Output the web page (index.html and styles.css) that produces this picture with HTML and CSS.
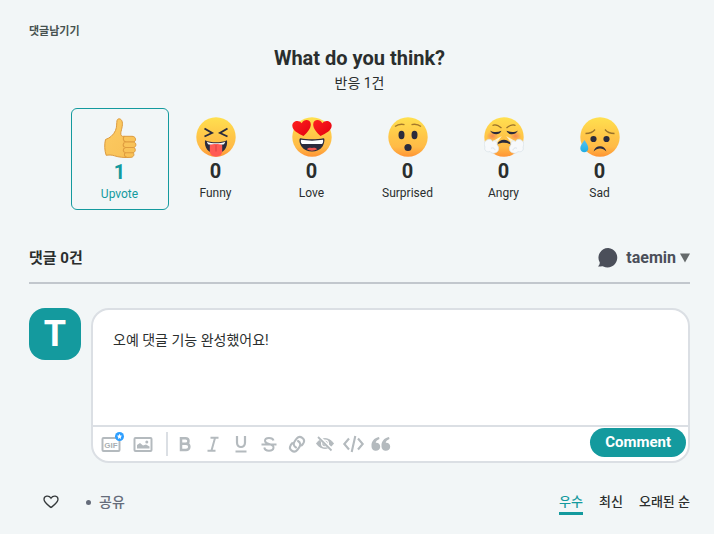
FILE: index.html
```html
<!DOCTYPE html>
<html lang="ko">
<head>
<meta charset="utf-8">
<meta name="viewport" content="width=device-width, initial-scale=1">
<title>댓글남기기</title>
<link rel="stylesheet" href="styles.css">
</head>
<body>
<svg class="defs" width="0" height="0" aria-hidden="true">
  <defs>
    <linearGradient id="face" x1="0" y1="0" x2="0" y2="1">
      <stop offset="0" stop-color="#ffe04f"/><stop offset=".5" stop-color="#ffc548"/><stop offset=".75" stop-color="#ffbb47"/><stop offset="1" stop-color="#ff9434"/>
    </linearGradient>
    <linearGradient id="heart" x1="0" y1="0" x2="1" y2="1">
      <stop offset="0" stop-color="#ff2020"/><stop offset="1" stop-color="#e2000f"/>
    </linearGradient>
    <linearGradient id="tear" x1="0" y1="0" x2="0" y2="1">
      <stop offset="0" stop-color="#58c2ee"/><stop offset="1" stop-color="#20aee4"/>
    </linearGradient>
    <linearGradient id="hand" x1="0" y1="0" x2="1" y2="1">
      <stop offset="0" stop-color="#fccb63"/><stop offset="1" stop-color="#f8c055"/>
    </linearGradient>
    <radialGradient id="blush">
      <stop offset="0" stop-color="#f47a55" stop-opacity=".8"/><stop offset="1" stop-color="#f47a55" stop-opacity="0"/>
    </radialGradient>
  </defs>
</svg>
<main class="page">
  <h3 class="page-label">댓글남기기</h3>

  <section class="poll">
    <h2 class="poll-title">What do you think?</h2>
    <p class="poll-total">반응 1건</p>
    <div class="reactions">
      <button type="button" class="reaction selected" aria-pressed="true">
        <svg class="emoji" viewBox="0 0 40 40" aria-hidden="true">
          <path d="M5.5 21.5C10 20 13.500 17 15.500 12.500C17 9 16.500 5 17 2.500C17.500 .3 20.500 .3 21.700 2.500C23.500 5.700 21.500 11 20.800 14.800C20.500 17.300 21.700 18.800 24 18.300H32C36.300 18.300 36.400 23.300 33.800 23.900C36.800 25 36.300 29 33.800 29.500C36.300 30.700 35.500 34.300 33 34.700C34.800 36 33.800 39.300 31 39.300C24.500 39.900 18.500 39.200 14.500 37.800C11.500 36.700 8.500 37 6.200 37.300C4.500 33 4.300 26 5.500 21.500Z" fill="url(#hand)" stroke="#dc9a3d" stroke-width="1"/>
          <path d="M33.800 23.900H26C22.800 23.600 22.600 19.500 24.500 18.300M33.800 29.500H25.500C22.300 29 22.500 24.800 25.500 23.900M33 34.800H25.500C22.500 34.200 22.500 30.500 25.500 29.500M27 39.300C24 38.800 23.500 35.500 25.800 34.800" fill="none" stroke="#df9c3f" stroke-width="1.100"/>
        </svg>
        <strong class="count">1</strong><span class="name">Upvote</span>
      </button>
      <button type="button" class="reaction" aria-pressed="false">
        <svg class="emoji" viewBox="0 0 40 40" aria-hidden="true">
          <circle cx="20" cy="20" r="19.700" fill="url(#face)"/>
          <path d="M8.500 11.500L16 16L8.500 19.500M31.500 11.500L24 16L31.500 19.500" fill="none" stroke="#2b2b3c" stroke-width="1.900"/>
          <path d="M9 23.300C15 26 25 26 31 23.300C32 31 27.500 36.500 20 36.500S8 31 9 23.300Z" fill="#2b2b3c"/>
          <path d="M10.800 24.800C16 26.800 24 26.800 29.300 24.800L28 27.200C23 28.500 17 28.500 12 27.200Z" fill="#fff"/>
          <path d="M13.800 28C17 26.600 23 26.600 26.200 28V34C26.200 37.500 23.500 39.700 20 39.700S13.800 37.500 13.800 34Z" fill="#ff5a54"/>
          <path d="M20 28V34.500" stroke="#d93f42" stroke-width="1"/>
        </svg>
        <strong class="count">0</strong><span class="name">Funny</span>
      </button>
      <button type="button" class="reaction" aria-pressed="false">
        <svg class="emoji" viewBox="0 0 40 40" aria-hidden="true">
          <circle cx="20" cy="20" r="19.700" fill="url(#face)"/>
          <path d="M11.500 19C6 16.500 .5 13.500 .3 8.800C.2 4.200 6.500 2.200 9.700 6.200C12 1.700 18.500 2.200 18.800 7.200C19 11.500 15 15.800 11.500 19Z" fill="url(#heart)"/>
          <path d="M28.500 19C34 16.500 39.500 13.500 39.700 8.800C39.800 4.200 33.500 2.200 30.300 6.200C28 1.700 21.500 2.200 21.200 7.200C21 11.500 25 15.800 28.500 19Z" fill="url(#heart)"/>
          <path d="M8.500 21.200C15 22.500 25 22.500 31.500 21.200C33.500 21.500 32 27 30.500 29.500C26 36.200 14 36.200 9.500 29.500C7.500 26.500 6.500 21.500 8.500 21.200Z" fill="#2b2b3c"/>
          <path d="M9 22.800C15 23.900 25 23.900 31 22.800C31.500 24.800 31 26 30 27H10C9 26 8.500 24.800 9 22.800Z" fill="#fff"/>
          <path d="M14.800 32.300C17 30 18.500 31 20 31S23 30 25.200 32.300C22 34.200 18 34.200 14.800 32.300Z" fill="#f05550"/>
        </svg>
        <strong class="count">0</strong><span class="name">Love</span>
      </button>
      <button type="button" class="reaction" aria-pressed="false">
        <svg class="emoji" viewBox="0 0 40 40" aria-hidden="true">
          <circle cx="20" cy="20" r="19.700" fill="url(#face)"/>
          <ellipse cx="13.500" cy="18" rx="3" ry="4.200" fill="#2b2b3c"/>
          <ellipse cx="26.500" cy="18" rx="3" ry="4.200" fill="#2b2b3c"/>
          <ellipse cx="20" cy="30.500" rx="3.600" ry="3.500" fill="#2b2b3c"/>
          <path d="M7 9.600C9.500 7.500 13 6.800 16.500 7.600M33 9.600C30.500 7.500 27 6.800 23.500 7.600" fill="none" stroke="#a5792b" stroke-width="1.300"/>
        </svg>
        <strong class="count">0</strong><span class="name">Surprised</span>
      </button>
      <button type="button" class="reaction" aria-pressed="false">
        <svg class="emoji" viewBox="0 0 40 40" aria-hidden="true">
          <circle cx="20" cy="20" r="19.700" fill="url(#face)"/>
          <ellipse cx="8.500" cy="19" rx="6" ry="5" fill="url(#blush)"/>
          <ellipse cx="31.500" cy="19" rx="6" ry="5" fill="url(#blush)"/>
          <path d="M8.500 8.500C11 7 14 8 17.500 11M31.500 8.500C29 7 26 8 22.500 11" fill="none" stroke="#98712b" stroke-width="1.300"/>
          <path d="M6 13.500C9 15.500 13.500 15.500 17.500 13.800C15.500 18.500 9 18.700 6 13.500ZM34 13.500C31 15.500 26.500 15.500 22.500 13.800C24.500 18.500 31 18.700 34 13.500Z" fill="#2b2b3c"/>
          <path d="M12.800 27.800C15.500 21 24.500 21 27.200 27.800C23 25.200 17 25.200 12.800 27.800Z" fill="#2b2b3c"/>
          <path d="M17.800 19L9 24L12 27ZM22.200 19L31 24L28 27Z" fill="#fff4d6"/>
          <path d="M3 23C5 21.600 7.500 22.400 8.500 24.500C11 22.500 14 25 13 28C15.500 30 15 35 11.500 35.700C9 36.800 7 36 6 34.600C2.500 35.500 -.2 33.200 1 30C-.5 27.500 .2 24 3 23Z" fill="#f7f9fb" stroke="#dbe3e8" stroke-width=".8"/>
          <path d="M37 23C35 21.600 32.500 22.400 31.500 24.500C29 22.500 26 25 27 28C24.500 30 25 35 28.500 35.700C31 36.800 33 36 34 34.600C37.500 35.500 40.200 33.200 39 30C40.500 27.500 39.800 24 37 23Z" fill="#f7f9fb" stroke="#dbe3e8" stroke-width=".8"/>
          <path d="M7 31.500C8.500 30 11 31.500 11 33.300M33 31.500C31.500 30 29 31.500 29 33.300" fill="none" stroke="#d3dce3" stroke-width=".8"/>
        </svg>
        <strong class="count">0</strong><span class="name">Angry</span>
      </button>
      <button type="button" class="reaction" aria-pressed="false">
        <svg class="emoji" viewBox="0 0 40 40" aria-hidden="true">
          <circle cx="20" cy="20" r="19.700" fill="url(#face)"/>
          <circle cx="13.500" cy="22" r="3.100" fill="#2b2b3c"/>
          <circle cx="26.500" cy="22" r="3.100" fill="#2b2b3c"/>
          <path d="M13.600 34.500C15 27.500 25 27.500 26.400 34.500C22.500 30.500 17.500 30.500 13.600 34.500Z" fill="#2b2b3c"/>
          <path d="M5.500 16.500C10 16.500 13 15.300 15 12.500M34.500 16.500C30 16.500 27 15.300 25 12.500" fill="none" stroke="#98712b" stroke-width="1.300"/>
          <path d="M4.500 23C6.500 26 8.300 28.500 8.300 31.200C8.300 36.500 .3 36.500 .3 31.200C.3 28.500 2.500 26 4.500 23Z" fill="url(#tear)"/>
        </svg>
        <strong class="count">0</strong><span class="name">Sad</span>
      </button>
    </div>
  </section>

  <header class="thread-head">
    <h2 class="thread-count">댓글 0건</h2>
    <button type="button" class="account">
      <svg class="bubble" viewBox="0 0 20 20" aria-hidden="true"><path d="M10.300 0A9.700 9.700 0 1 1 5.300 18.400C3.800 18 1.800 18.600 0 18.500C1.200 17.400 1.800 16 1.800 14.500A9.700 9.700 0 0 1 10.300 0Z" fill="#4b4f5a"/></svg>
      <span>taemin</span>
      <svg class="caret" viewBox="0 0 10 10" aria-hidden="true"><path d="M0 .5H10L5 9.500Z" fill="#656a6b"/></svg>
    </button>
  </header>

  <form class="composer">
    <div class="avatar" aria-hidden="true">T</div>
    <div class="editor">
      <textarea class="draft" aria-label="댓글" spellcheck="false">오예 댓글 기능 완성했어요!</textarea>
      <div class="toolbar">
        <div class="tools media">
          <button type="button" class="tool gif" aria-label="GIF">
            <svg viewBox="0 0 24 24"><rect x="3.500" y="6" width="17" height="13" rx="1" fill="none" stroke="#b4babe" stroke-width="2"/><text class="gif-text" x="12" y="15.500" text-anchor="middle">GIF</text><circle cx="20.500" cy="4.500" r="4.500" fill="#2e9fff"/><path d="M20.500 1.800L21.300 3.500L23.100 3.700L21.800 5L22.100 6.900L20.500 6L18.900 6.900L19.200 5L17.900 3.700L19.700 3.500Z" fill="#fff"/></svg>
          </button>
          <button type="button" class="tool" aria-label="Image">
            <svg viewBox="0 0 24 24"><rect x="3.500" y="6" width="17" height="13" rx="1" fill="none" stroke="#b4babe" stroke-width="2"/><path d="M6 16.500V13L9 11L12 13.500L15 12.500L18.500 14.500V16.500Z" fill="#b4babe"/><circle cx="15.800" cy="10" r="1.500" fill="#b4babe"/></svg>
          </button>
        </div>
        <div class="tools">
          <button type="button" class="tool" aria-label="Bold"><svg viewBox="0 0 24 24"><path d="M8 6.200H12.500C16.500 6.200 16.500 11.700 12.500 11.700H8ZM8 11.700H13C17.500 11.700 17.500 18 13 18H8Z" fill="none" stroke="#b4babe" stroke-width="2.500"/></svg></button>
          <button type="button" class="tool" aria-label="Italic"><svg viewBox="0 0 24 24"><path d="M9.500 5.800H17.500M6.500 18.700H14.500M14 6L10.500 18.500" fill="none" stroke="#b4babe" stroke-width="2"/></svg></button>
          <button type="button" class="tool" aria-label="Underline"><svg viewBox="0 0 24 24"><path d="M8 4V10.500C8 16.500 16 16.500 16 10.500V4M6.500 19.500H17.500" fill="none" stroke="#b4babe" stroke-width="2.200"/></svg></button>
          <button type="button" class="tool" aria-label="Strikethrough"><svg viewBox="0 0 24 24"><path d="M16.500 8.500C15.500 5 8 5 8 8.800C8 11 10 11.500 12 12C15 12.700 16.800 13.500 16.500 15.800C16 19.500 8 19.800 7.300 15.500M4.500 12.500H19.500" fill="none" stroke="#b4babe" stroke-width="2"/></svg></button>
          <button type="button" class="tool" aria-label="Link"><svg viewBox="0 0 24 24"><path d="M11 15.500C8.500 14 8 11.500 9.800 9.200L11.800 6.500C15 2.700 21 7 18.300 11.300L16.800 13.300M13 9C15.500 10.500 16 13 14.200 15.300L12.200 18C9 21.800 3 17.500 5.700 13.200L7.200 11.200" fill="none" stroke="#b4babe" stroke-width="2.100" stroke-linecap="round"/></svg></button>
          <button type="button" class="tool" aria-label="Spoiler"><svg viewBox="0 0 24 24"><path d="M3.500 11.500C7.500 5 16.500 5 20.500 11.500C16.500 18 7.500 18 3.500 11.500Z" fill="#b4babe" stroke="#b4babe"/><circle cx="12" cy="11.500" r="3.400" fill="none" stroke="#fff" stroke-width="1.300"/><path d="M5.500 4.500L19 18" stroke="#fff" stroke-width="3.800"/><path d="M5 5L18.500 18.500" stroke="#b4babe" stroke-width="1.800"/></svg></button>
          <button type="button" class="tool" aria-label="Code"><svg viewBox="0 0 24 24"><path d="M8 6.500L3.300 12L8 17.500M17 6.500L21.700 12L17 17.500M14.300 4L10.700 20" fill="none" stroke="#b4babe" stroke-width="2.100"/></svg></button>
          <button type="button" class="tool" aria-label="Quote"><svg viewBox="0 0 24 24"><path id="quote-mark" d="M10 5C5 6 2.300 9.500 2.500 14C2.500 20.500 11.200 20 11.200 14.800C11.200 11.800 9 10.500 6.700 10.800C7 9 8.500 7.700 10.500 7Z" fill="#b4babe"/><use href="#quote-mark" x="10"/></svg></button>
        </div>
        <button type="submit" class="submit">Comment</button>
      </div>
    </div>
  </form>

  <footer class="thread-foot">
    <div class="thread-actions">
      <button type="button" class="plain like" aria-label="Favorite"><svg viewBox="0 0 16 14"><path d="M8 12.500C4.500 9.700 1 7.500 1 4.300C1 .7 5.800 -.2 8 3.200C10.200 -.2 15 .7 15 4.300C15 7.500 11.500 9.700 8 12.500Z" fill="none" stroke="#35393b" stroke-width="1.300"/></svg></button>
      <span class="dot"></span>
      <button type="button" class="plain share">공유</button>
    </div>
    <nav class="sort">
      <a href="#best" class="active" aria-current="true">우수</a>
      <a href="#newest">최신</a>
      <a href="#oldest">오래된 순</a>
    </nav>
  </footer>
</main>
</body>
</html>
```
FILE: styles.css
```css
* { box-sizing: border-box; }

body {
  margin: 0;
  background: #f2f6f7;
  color: #2a2e2e;
  font-family: Roboto, "Noto Sans CJK KR", sans-serif;
  font-size: 14px;
  line-height: 20px;
}

h2, h3, p { margin: 0; }

button, textarea {
  margin: 0;
  padding: 0;
  border: 0;
  background: none;
  color: inherit;
  font: inherit;
}

button { cursor: pointer; }
svg { display: block; }
.defs { position: absolute; }

.page { padding: 22px 24px 16px 29px; }

.page-label {
  color: #46514f;
  font-size: 11px;
  font-weight: 700;
  line-height: 20px;
}

.poll { text-align: center; }

.poll-title {
  margin-top: 3px;
  font-size: 20px;
  font-weight: 700;
  line-height: 26px;
}

.poll-total { line-height: 24px; }

.reactions {
  display: grid;
  grid-template-columns: repeat(6, 1fr);
  max-width: 576px;
  margin: 13px auto 0;
}

.reaction {
  display: flex;
  flex-direction: column;
  align-items: center;
  height: 102px;
  padding-top: 9px;
  border-radius: 6px;
}

.reaction.selected {
  margin: 0 -1px;
  border: 1px solid #149a9e;
  color: #149a9e;
}

.emoji { width: 40px; height: 40px; }
.count { font-size: 20px; line-height: 28px; }
.name { font-size: 12px; line-height: 16px; }

.thread-head {
  display: flex;
  align-items: center;
  justify-content: space-between;
  height: 50px;
  margin-top: 24px;
  border-bottom: 2px solid #c2c7cd;
}

.thread-count { font-size: 15px; font-weight: 700; }

.account {
  display: flex;
  align-items: center;
  gap: 4px;
  color: #4b4f5a;
  font-size: 16px;
  font-weight: 700;
}

.bubble { width: 20px; height: 20px; margin-right: 4px; }
.caret { width: 10px; height: 10px; }

.composer {
  display: flex;
  align-items: flex-start;
  gap: 10px;
  margin-top: 24px;
}

.avatar {
  flex: none;
  width: 52px;
  height: 52px;
  border-radius: 16px;
  background: #149a9e;
  color: #fff;
  font-size: 36px;
  font-weight: 700;
  line-height: 52px;
  text-align: center;
}

.editor {
  flex: 1;
  min-width: 0;
  overflow: hidden;
  border: 2px solid #dbdfe4;
  border-radius: 18px;
  background: #fff;
}

.draft {
  display: block;
  width: 100%;
  height: 115px;
  padding: 20px;
  outline: 0;
  resize: none;
}

.toolbar {
  display: flex;
  align-items: center;
  height: 36px;
  padding: 0 2px 0 6px;
  border-top: 2px solid #dbdfe4;
}

.tools { display: flex; gap: 4px; }

.media {
  gap: 8px;
  margin-right: 5px;
  padding-right: 11px;
  border-right: 2px solid #dbdfe4;
}

.tool svg { width: 24px; height: 24px; overflow: visible; }

.gif-text {
  fill: #a9afb3;
  font-family: "Liberation Sans", sans-serif;
  font-size: 8px;
  font-weight: 700;
}

.submit {
  height: 29px;
  margin: 0 0 4px auto;
  padding: 0 15px;
  border-radius: 15px;
  background: #149a9e;
  color: #fff;
  font-size: 15px;
  font-weight: 700;
}

.thread-foot {
  display: flex;
  align-items: flex-start;
  justify-content: space-between;
  margin-top: 28px;
}

.thread-actions { display: flex; align-items: center; height: 22px; padding-left: 14px; }
.like svg { width: 16px; height: 14px; }

.dot {
  width: 5px;
  height: 5px;
  margin: 0 8px 0 27px;
  border-radius: 50%;
  background: #656c7a;
}

.share { color: #656c7a; font-weight: 500; }

.sort { display: flex; gap: 16px; }

.sort a {
  border-bottom: 3px solid transparent;
  font-size: 13px;
  font-weight: 500;
  line-height: 21px;
  color: #2a2e2e;
  text-decoration: none;
}

.sort .active { border-color: #149a9e; color: #149a9e; }
```
